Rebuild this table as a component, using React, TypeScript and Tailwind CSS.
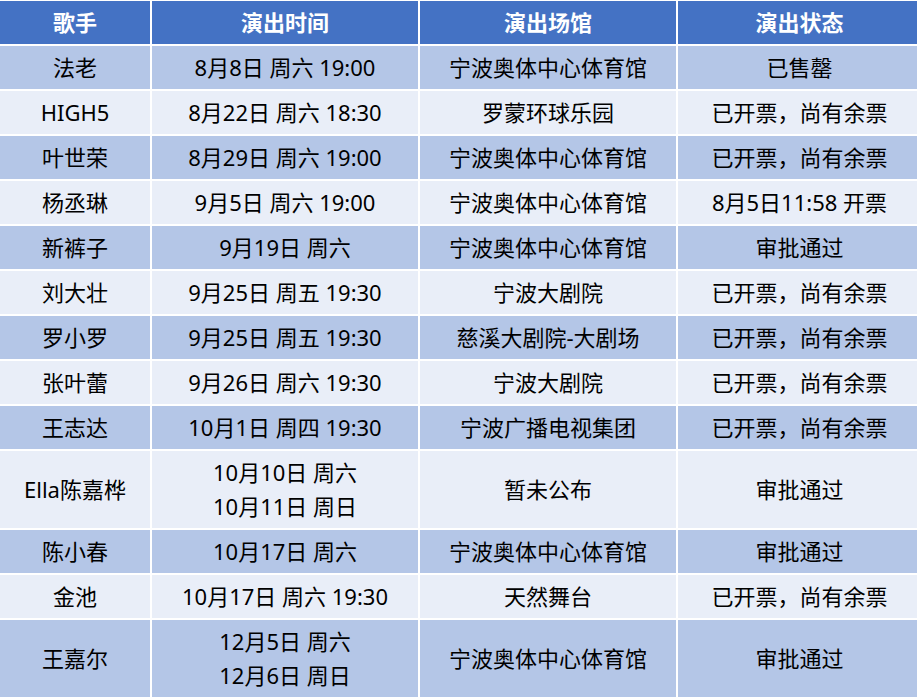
import React from "react";

type Row = { name: string; time: string[]; venue: string; status: string; tall?: boolean };

const rows: Row[] = [
  { name: "法老", time: ["8月8日 周六 19:00"], venue: "宁波奥体中心体育馆", status: "已售罄" },
  { name: "HIGH5", time: ["8月22日 周六 18:30"], venue: "罗蒙环球乐园", status: "已开票，尚有余票" },
  { name: "叶世荣", time: ["8月29日 周六 19:00"], venue: "宁波奥体中心体育馆", status: "已开票，尚有余票" },
  { name: "杨丞琳", time: ["9月5日 周六 19:00"], venue: "宁波奥体中心体育馆", status: "8月5日11:58 开票" },
  { name: "新裤子", time: ["9月19日 周六"], venue: "宁波奥体中心体育馆", status: "审批通过" },
  { name: "刘大壮", time: ["9月25日 周五 19:30"], venue: "宁波大剧院", status: "已开票，尚有余票" },
  { name: "罗小罗", time: ["9月25日 周五 19:30"], venue: "慈溪大剧院-大剧场", status: "已开票，尚有余票" },
  { name: "张叶蕾", time: ["9月26日 周六 19:30"], venue: "宁波大剧院", status: "已开票，尚有余票" },
  { name: "王志达", time: ["10月1日 周四 19:30"], venue: "宁波广播电视集团", status: "已开票，尚有余票" },
  { name: "Ella陈嘉桦", time: ["10月10日 周六", "10月11日 周日"], venue: "暂未公布", status: "审批通过", tall: true },
  { name: "陈小春", time: ["10月17日 周六"], venue: "宁波奥体中心体育馆", status: "审批通过" },
  { name: "金池", time: ["10月17日 周六 19:30"], venue: "天然舞台", status: "已开票，尚有余票" },
  { name: "王嘉尔", time: ["12月5日 周六", "12月6日 周日"], venue: "宁波奥体中心体育馆", status: "审批通过", tall: true },
];

export default function App() {
  return (
    <div
      className="w-[917px] h-[697px] overflow-hidden bg-white pt-[1px]"
      style={{ fontFamily: '"Noto Sans", "Noto Sans CJK SC", sans-serif' }}
    >
      <div className="grid grid-cols-[150px_266px_256px_243px] gap-[2px] text-[22px] leading-[34px] text-black">
        {["歌手", "演出时间", "演出场馆", "演出状态"].map((h) => (
          <div key={h} className="h-[43px] pb-[2px] bg-[#4472C4] text-white font-bold flex items-center justify-center">
            {h}
          </div>
        ))}
        {rows.map((r, i) => {
          const bg = i % 2 === 0 ? "bg-[#B4C6E7]" : "bg-[#E9EEF8]";
          const h = r.tall ? "h-[77px]" : "h-[43px]";
          return (
            <React.Fragment key={i}>
              <div className={`${bg} ${h} pb-[2px] flex items-center justify-center`}>{r.name}</div>
              <div className={`${bg} ${h} pb-[2px] flex flex-col items-center justify-center`}>
                {r.time.map((t) => (
                  <span key={t}>{t}</span>
                ))}
              </div>
              <div className={`${bg} ${h} pb-[2px] flex items-center justify-center`}>{r.venue}</div>
              <div className={`${bg} ${h} pb-[2px] flex items-center justify-center`}>{r.status}</div>
            </React.Fragment>
          );
        })}
      </div>
    </div>
  );
}
